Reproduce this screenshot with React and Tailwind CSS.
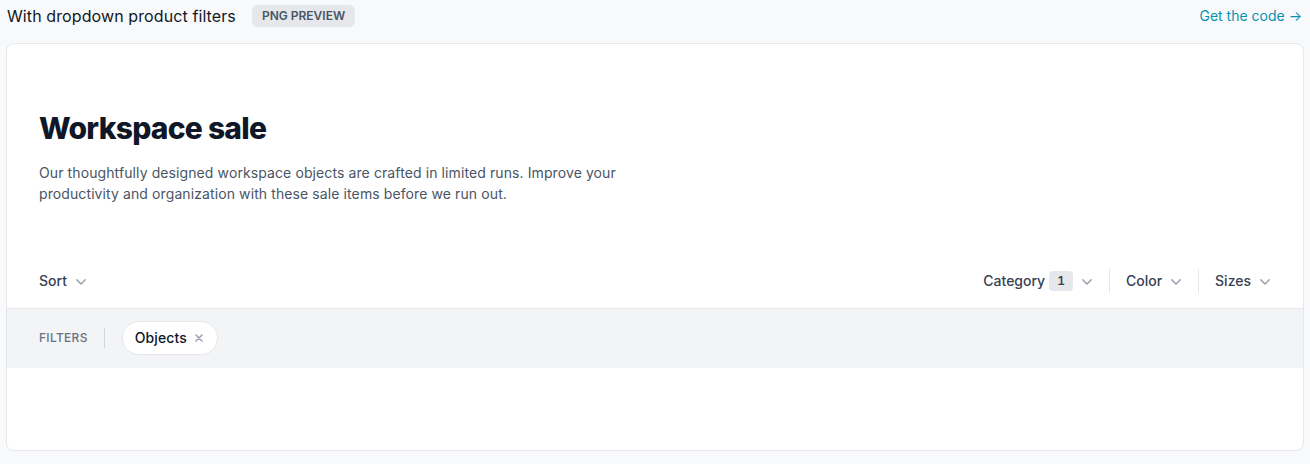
import React from 'react';

function Chevron() {
  return (
    <svg viewBox="0 0 20 20" fill="currentColor" className="-mr-1 ml-1 h-5 w-5 shrink-0 text-gray-400" aria-hidden="true">
      <path
        fillRule="evenodd"
        d="M5.22 8.22a.75.75 0 0 1 1.06 0L10 11.94l3.72-3.72a.75.75 0 1 1 1.06 1.06l-4.25 4.25a.75.75 0 0 1-1.06 0L5.22 9.28a.75.75 0 0 1 0-1.06Z"
        clipRule="evenodd"
      />
    </svg>
  );
}

const filters = [
  { name: 'Category', count: 1 },
  { name: 'Color' },
  { name: 'Sizes' },
];

export default function App() {
  return (
    <div className="min-h-screen bg-[#f8f9fa] font-['Inter',sans-serif] pb-[13px]">
      <div className="flex h-8 items-center justify-between pl-[7px] pr-[8px]">
        <div className="flex items-center">
          <h2 className="text-base tracking-[0.1px] text-gray-900">With dropdown product filters</h2>
          <span className="ml-4 rounded-md bg-gray-200 px-2.5 py-[3px] text-xs font-semibold text-gray-600">
            PNG PREVIEW
          </span>
        </div>
        <a className="text-sm text-[#0891b2]">Get the code →</a>
      </div>

      <div className="mx-1.5 mt-[11px] overflow-hidden rounded-lg border border-gray-200 bg-white">
        <div className="px-8 pt-[66px] pb-[50px]">
          <h1 className="text-3xl font-extrabold tracking-tight text-gray-900">Workspace sale</h1>
          <p className="mt-4 max-w-[590px] text-sm leading-[21px] tracking-[0.1px] text-gray-600">
            Our thoughtfully designed workspace objects are crafted in limited runs. Improve your productivity and
            organization with these sale items before we run out.
          </p>
        </div>

        <div className="flex items-center justify-between border-b border-gray-200 px-8 py-[15px]">
          <button className="flex items-center text-sm font-medium text-gray-700">
            Sort
            <Chevron />
          </button>
          <div className="flex items-center">
            {filters.map((f, i) => (
              <button
                key={f.name}
                className={
                  'flex h-6 items-center px-4 text-sm font-medium text-gray-700 last:pr-0 ' +
                  (i > 0 ? 'border-l border-gray-200' : '')
                }
              >
                {f.name}
                {f.count ? (
                  <span className="ml-1 rounded bg-gray-200 px-2 py-0.5 text-xs font-semibold tabular-nums text-gray-700">
                    {f.count}
                  </span>
                ) : null}
                <Chevron />
              </button>
            ))}
          </div>
        </div>

        <div className="flex items-center bg-gray-100 px-8 pt-3 pb-[13px]">
          <h3 className="text-xs font-medium uppercase tracking-wide text-gray-500">Filters</h3>
          <div className="ml-4 h-5 w-px bg-gray-300" />
          <div className="ml-[17px] flex items-center">
            <span className="inline-flex items-center rounded-full border border-gray-200 bg-white py-1.5 pl-3 pr-2.5 text-sm font-medium tracking-[0.1px] text-gray-900">
              Objects
              <span className="ml-1 inline-flex h-4 w-4 shrink-0 items-center justify-center text-gray-400">
                <svg className="h-2 w-2" stroke="currentColor" fill="none" viewBox="0 0 8 8">
                  <path strokeLinecap="round" strokeWidth="1.5" d="M1 1l6 6m0-6L1 7" />
                </svg>
              </span>
            </span>
          </div>
        </div>

        <div className="h-[82px]" />
      </div>
    </div>
  );
}
